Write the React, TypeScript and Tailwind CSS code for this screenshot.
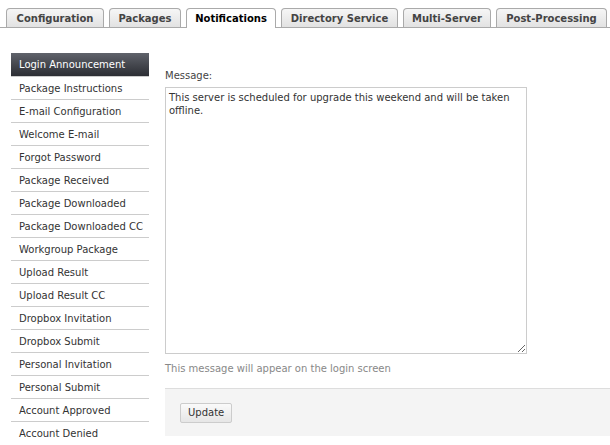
const tabs = [
  { label: "Configuration", w: "w-[98px]" },
  { label: "Packages", w: "w-[72px]" },
  { label: "Notifications", w: "w-[90px]" },
  { label: "Directory Service", w: "w-[117px]" },
  { label: "Multi-Server", w: "w-[88px]" },
  { label: "Post-Processing", w: "w-[111px]" },
];

const items = [
  "Login Announcement",
  "Package Instructions",
  "E-mail Configuration",
  "Welcome E-mail",
  "Forgot Password",
  "Package Received",
  "Package Downloaded",
  "Package Downloaded CC",
  "Workgroup Package",
  "Upload Result",
  "Upload Result CC",
  "Dropbox Invitation",
  "Dropbox Submit",
  "Personal Invitation",
  "Personal Submit",
  "Account Approved",
  "Account Denied",
];

export default function App() {
  const active = "Notifications";
  return (
    <div className="w-[610px] h-[445px] overflow-hidden bg-white text-[10px] text-[#333] font-['DejaVu_Sans',Verdana,sans-serif]">
      {/* tab strip */}
      <div className="flex items-end gap-[5px] pl-[6px] pt-[8px] border-b border-[#aaa] h-[28px] whitespace-nowrap">
        {tabs.map((t) => (
          <div
            key={t.label}
            className={
              t.label === active
                ? `${t.w} h-[20px] -mb-px flex items-center justify-center font-bold text-black bg-white border border-b-0 border-[#aaa] rounded-t-[4px]`
                : `${t.w} h-[19px] flex items-center justify-center font-bold text-[#444] bg-gradient-to-b from-[#f6f6f6] to-[#e2e2e2] border border-b-0 border-[#aaa] rounded-t-[4px]`
            }
          >
            {t.label}
          </div>
        ))}
      </div>

      <div className="flex pt-[25px]">
        {/* side list */}
        <div className="ml-[11px] w-[138px] shrink-0">
          {items.map((it, i) => (
            <div
              key={it}
              className={
                i === 0
                  ? "h-[23px] pl-[8px] flex items-center whitespace-nowrap text-white bg-gradient-to-b from-[#60636b] to-[#2c2e34]"
                  : "h-[23px] pl-[8px] flex items-center whitespace-nowrap border-t border-[#ccc]"
              }
            >
              {it}
            </div>
          ))}
        </div>

        {/* form */}
        <div className="ml-[16px] flex-1 pt-[15px]">
          <div className="text-[#444] mb-[4px]">Message:</div>
          <textarea
            className="w-[362px] h-[267px] border border-[#ccc] px-[3px] py-[3px] text-[10px] text-[#333] leading-[13px] font-['DejaVu_Sans',Verdana,sans-serif] resize-y outline-none block"
            defaultValue="This server is scheduled for upgrade this weekend and will be taken offline."
          />
          <div className="mt-[7px] text-[#888]">This message will appear on the login screen</div>
          <div className="mt-[12px] h-[48px] bg-[#f4f4f4] border-t border-[#ddd] pl-[15px] flex items-center">
            <button className="h-[20px] px-[7px] border border-[#ccc] bg-gradient-to-b from-[#fafafa] to-[#e6e6e6] text-[#333] text-[10px] font-['DejaVu_Sans',Verdana,sans-serif] rounded-[2px]">
              Update
            </button>
          </div>
        </div>
      </div>
    </div>
  );
}
